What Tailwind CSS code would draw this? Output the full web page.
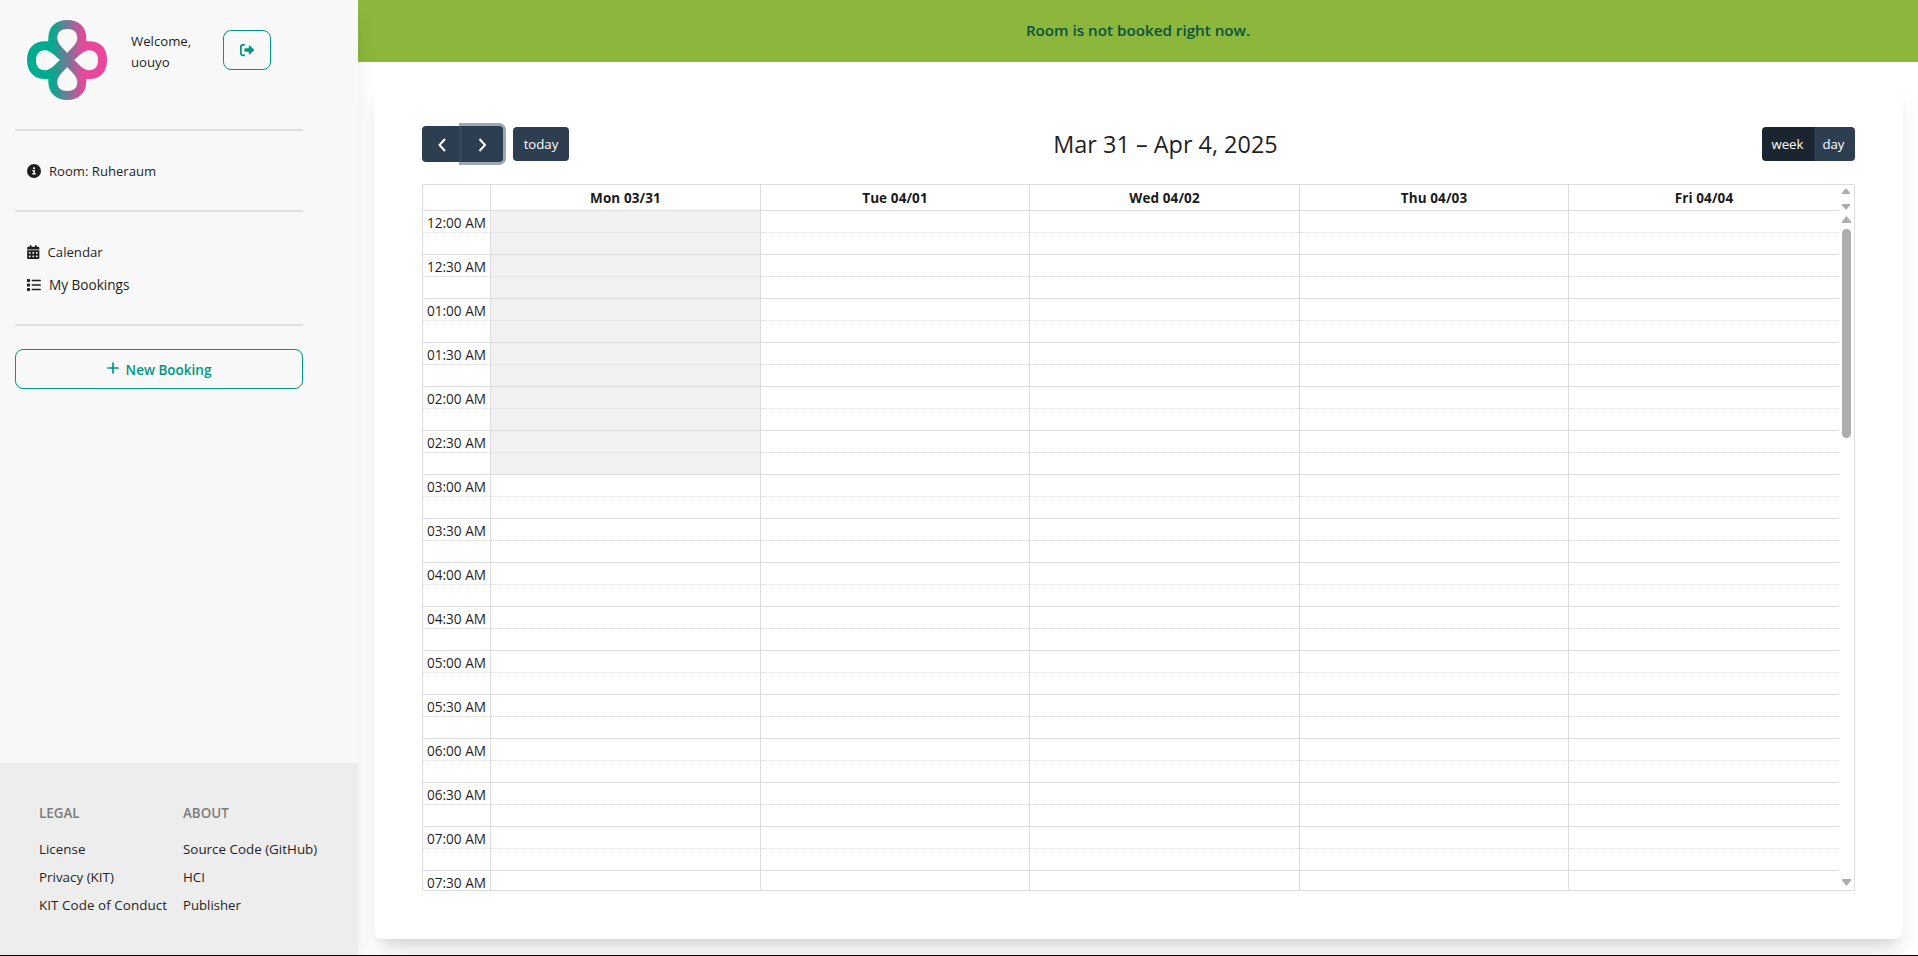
<!DOCTYPE html>
<html lang="en">
<head>
<meta charset="utf-8">
<title>Room booking</title>
<script src="https://cdn.jsdelivr.net/npm/@tailwindcss/browser@4"></script>
</head>
<body class="h-[956px] overflow-hidden bg-white font-['Open_Sans',sans-serif] text-[13.2px] text-[#1f1f1f]">
<div class="flex h-[956px] border-b border-black">
  <aside class="relative z-10 flex w-[358px] shrink-0 flex-col justify-between bg-[#f8f8f8] shadow-xl">
    <div class="w-[303px] pl-[15px]">
      <div class="flex h-[129px] pt-5 pl-3">
        <svg class="size-20 shrink-0" viewBox="0 0 80 80">
          <defs><linearGradient id="lg" gradientUnits="userSpaceOnUse" x1="24" y1="0" x2="57" y2="0"><stop offset="0" stop-color="#00ab90"/><stop offset="1" stop-color="#e9479b"/></linearGradient></defs>
          <path fill="url(#lg)" fill-rule="evenodd" d="M21.300 21.300V18.500C21.300 6.500 29 0 40.300 0S59.300 6.500 59.300 18.500V21.300H62C74 21.300 80 28.500 80 40S74 59 62 59H59.300V61.500C59.300 73 51.500 80 40.300 80S21.300 73 21.300 61.500V59H18.500C6.500 59 0 51.500 0 40S6.500 21.300 18.500 21.300Z
          M40.200 33C37.500 29.500 30.300 24 30.300 18C30.300 12 34 9 40.300 9S50.300 12 50.300 18C50.300 24 43 29.500 40.200 33Z
          M40.200 47C37.500 50.500 30.300 56 30.300 62C30.300 68 34 71 40.300 71S50.300 68 50.300 62C50.300 56 43 50.500 40.200 47Z
          M33 40C29.500 37.300 24 30.200 18 30.200C12 30.200 9 34 9 40.200S12 50.200 18 50.200C24 50.200 29.500 43 33 40Z
          M47.200 40C50.500 37.300 56 30.200 62 30.200C68 30.200 71 34 71 40.200S68 50.200 62 50.200C56 50.200 50.500 43 47.200 40Z"/>
        </svg>
        <div class="ml-6 w-[92px] pt-[11px] leading-[21px]">Welcome,<br>uouyo</div>
        <button class="mt-2.5 flex h-10 w-12 items-center justify-center rounded-lg border border-[#009682] text-[#009682]">
          <svg class="h-[14px] w-[14px]" viewBox="0 0 512 512" fill="currentColor"><path d="M502.600 278.600c12.500-12.500 12.500-32.800 0-45.300l-128-128c-9.200-9.200-22.900-11.900-34.900-6.900S320 115 320 128v64h-128c-18 0-32 14-32 32v64c0 18 14 32 32 32h128v64c0 13 7.800 24.600 19.800 29.600s25.700 2.200 34.900-6.900l128-128zM160 96c18 0 32-14 32-32s-14-32-32-32H96C43 32 0 75 0 128v256c0 53 43 96 96 96h64c18 0 32-14 32-32s-14-32-32-32H96c-18 0-32-14-32-32V128c0-18 14-32 32-32h64z"/></svg>
        </button>
      </div>
      <div class="h-0.5 bg-[#e0e0e0]"></div>
      <div class="flex h-[79px] items-center gap-2 pl-3">
        <svg class="size-[14px]" viewBox="0 0 14 14"><circle cx="7" cy="7" r="7" fill="#1f1f1f"/><g fill="#fff"><circle cx="7" cy="4.200" r="1"/><path d="M5.400 6h2.400v3.200h1v1.200H5.200V9.200h1.200v-2h-1z"/></g></svg>
        <span class="pt-0.5 text-[13.1px]">Room: Ruheraum</span>
      </div>
      <div class="h-0.5 bg-[#e0e0e0]"></div>
      <div class="flex h-[112px] flex-col justify-center gap-[13px] pl-3 leading-5">
        <div class="flex items-center gap-2">
          <svg class="h-[14px] w-[12.500px]" viewBox="0 0 448 512" fill="#1f1f1f"><path d="M128 0c17.700 0 32 14.300 32 32v32h128V32c0-17.700 14.300-32 32-32s32 14.300 32 32v32h48c26.500 0 48 21.500 48 48v48H0v-48c0-26.500 21.500-48 48-48h48V32c0-17.700 14.300-32 32-32zM0 192h448v272c0 26.500-21.500 48-48 48H48c-26.500 0-48-21.500-48-48V192zm64 80v32c0 8.800 7.200 16 16 16h32c8.800 0 16-7.200 16-16v-32c0-8.800-7.200-16-16-16H80c-8.800 0-16 7.200-16 16zm128 0v32c0 8.800 7.200 16 16 16h32c8.800 0 16-7.200 16-16v-32c0-8.800-7.200-16-16-16h-32c-8.800 0-16 7.200-16 16zm144-16c-8.800 0-16 7.200-16 16v32c0 8.800 7.200 16 16 16h32c8.800 0 16-7.200 16-16v-32c0-8.800-7.200-16-16-16h-32zM64 400v32c0 8.800 7.200 16 16 16h32c8.800 0 16-7.200 16-16v-32c0-8.800-7.200-16-16-16H80c-8.800 0-16 7.200-16 16zm144-16c-8.800 0-16 7.200-16 16v32c0 8.800 7.200 16 16 16h32c8.800 0 16-7.200 16-16v-32c0-8.800-7.200-16-16-16h-32zm112 16v32c0 8.800 7.200 16 16 16h32c8.800 0 16-7.200 16-16v-32c0-8.800-7.200-16-16-16h-32c-8.800 0-16 7.200-16 16z"/></svg>
          <span>Calendar</span>
        </div>
        <div class="flex items-center gap-2">
          <svg class="size-[14px]" viewBox="0 0 14 14" fill="#1f1f1f"><rect x="0" y="1" width="3" height="3" rx=".6"/><rect x="0" y="5.600" width="3" height="3" rx=".6"/><rect x="0" y="10" width="3" height="3" rx=".6"/><rect x="4.500" y="1.700" width="9.500" height="1.600" rx=".7"/><rect x="4.500" y="6.200" width="9.500" height="1.600" rx=".7"/><rect x="4.500" y="10.700" width="9.500" height="1.600" rx=".7"/></svg>
          <span class="text-[13.6px]">My Bookings</span>
        </div>
      </div>
      <div class="h-0.5 bg-[#e0e0e0]"></div>
      <button class="mt-[23px] flex h-10 w-full items-center justify-center gap-[7px] rounded-lg border border-[#009682] text-[13.5px] font-semibold text-[#009682]">
        <svg class="size-[12px] -mt-[3px]" viewBox="0 0 12 12" stroke="currentColor" stroke-width="1.700" stroke-linecap="round"><path d="M6 1v10M1 6h10"/></svg>
        <span class="pt-[3px]">New Booking</span>
      </button>
    </div>
    <footer class="grid h-[192px] grid-cols-[144px_1fr] content-start bg-[#ededed] pt-10 pl-[39px] text-[13.4px] leading-[20px]">
      <div class="flex flex-col gap-2">
        <div class="mb-2 font-semibold text-[#7c7c7c]">LEGAL</div>
        <div>License</div><div>Privacy (KIT)</div><div class="tracking-[0.07px]">KIT Code of Conduct</div>
      </div>
      <div class="flex flex-col gap-2">
        <div class="mb-2 font-semibold text-[#7c7c7c]">ABOUT</div>
        <div>Source Code (GitHub)</div><div>HCI</div><div class="text-[13.2px]">Publisher</div>
      </div>
    </footer>
  </aside>
  <main class="flex min-w-0 flex-1 flex-col">
    <div class="flex h-[62px] shrink-0 items-center justify-center bg-[#8cb63c] pb-0.5 text-[15.200px] font-semibold text-[#07533f]">Room is not booked right now.</div>
    <div class="relative z-20 mt-4 mr-[15px] ml-4 h-[861px] rounded-lg bg-white px-12 pt-12 shadow-xl">
      <div class="flex h-9 items-center justify-between text-[13.200px] text-white">
        <div class="flex items-center">
          <button class="flex h-9 w-10 items-center justify-center rounded-l bg-[#2c3e50]"><svg class="size-[18px]" viewBox="0 0 18 18" fill="none" stroke="currentColor" stroke-width="2"><path d="M12 4 6.500 10l5.500 6"/></svg></button>
          <button class="flex h-9 w-[41px] items-center justify-center rounded-r bg-[#2c3e50] shadow-[0_0_0_3px_rgba(62,80,98,.5)]"><svg class="size-[18px]" viewBox="0 0 18 18" fill="none" stroke="currentColor" stroke-width="2"><path d="m5.500 4 5.500 6-5.500 6"/></svg></button>
          <button class="ml-2.5 h-[34px] w-14 rounded bg-[#2c3e50] pt-0.5">today</button>
        </div>
        <div class="pt-[2px] text-[23.450px] text-[#1f1f1f]">Mar 31 – Apr 4, 2025</div>
        <div class="flex h-[34px] w-[93px] overflow-hidden rounded">
          <button class="w-[52px] border-r border-[#151e27] bg-[#1a252f] pt-0.5">week</button><button class="w-[41px] bg-[#2c3e50] pt-0.5 pr-0.5">day</button>
        </div>
      </div>
      <div class="mt-[22px] flex h-[707px] flex-col border border-[#ddd]">
        <div class="flex h-[26px] shrink-0">
          <div class="grid flex-1 grid-cols-[68px_270px_269px_270px_269px_1fr] border-b border-[#ddd] text-center text-[13.5px] font-bold leading-[26px] tracking-[0.1px] text-[#1a1a1a]">
            <div class="border-r border-[#ddd]"></div>
            <div class="border-r border-[#ddd]">Mon 03/31</div>
            <div class="border-r border-[#ddd]">Tue 04/01</div>
            <div class="border-r border-[#ddd]">Wed 04/02</div>
            <div class="border-r border-[#ddd]">Thu 04/03</div>
            <div>Fri 04/04</div>
          </div>
          <div class="flex w-[15px] flex-col items-center justify-between pt-[3px] pr-px pb-px">
            <svg class="h-[6px] w-[8px]" viewBox="0 0 8 6" fill="#adadad"><path d="M4 0 8 4.800V6H0V4.800z"/></svg>
            <svg class="h-[6px] w-[8px]" viewBox="0 0 8 6" fill="#adadad"><path d="M4 6 8 1.200V0H0v1.200z"/></svg>
          </div>
        </div>
        <div class="flex h-[679px] overflow-hidden">
          <div id="slots" class="flex-1"></div>
          <div class="flex w-[15px] flex-col items-center pt-[5px] pr-px">
            <svg class="h-[7px] w-[9px] shrink-0" viewBox="0 0 9 7" fill="#adadad"><path d="M4.500 0 9 5.500V7H0V5.500z"/></svg>
            <div class="mt-[6px] h-[209px] w-[9px] rounded-full bg-[#adadad]"></div>
            <svg class="mt-auto mb-[4px] h-[7px] w-[9px] shrink-0" viewBox="0 0 9 7" fill="#adadad"><path d="M4.500 7 9 1.500V0H0v1.500z"/></svg>
          </div>
        </div>
      </div>
    </div>
  </main>
</div>
<script>
// Half-hour rows; slots before 03:00 on Monday are shaded.
const solid = 'h-[22px] border-b border-[#ddd]', dotted = 'h-[22px] border-b border-dotted border-[#ddd]';
let html = '';
for (let i = 0; i < 16; i++) {
  const h = Math.floor(i / 2) || 12, label = String(h).padStart(2, '0') + ':' + (i % 2 ? '30' : '00') + ' AM';
  html += '<div class="grid grid-cols-[68px_270px_269px_270px_269px_1fr]">';
  for (let c = 0; c < 6; c++) {
    const edge = c < 5 ? 'border-r border-[#ddd] ' : '';
    const shade = c === 1 && i < 6 ? 'bg-[#f1f1f1] ' : '';
    html += `<div class="${edge}${shade}"><div class="${dotted} pr-1 text-right text-[13.6px] leading-[23px]">${c ? '' : label}</div><div class="${solid}"></div></div>`;
  }
  html += '</div>';
}
document.getElementById('slots').innerHTML = html;
</script>
</body>
</html>
